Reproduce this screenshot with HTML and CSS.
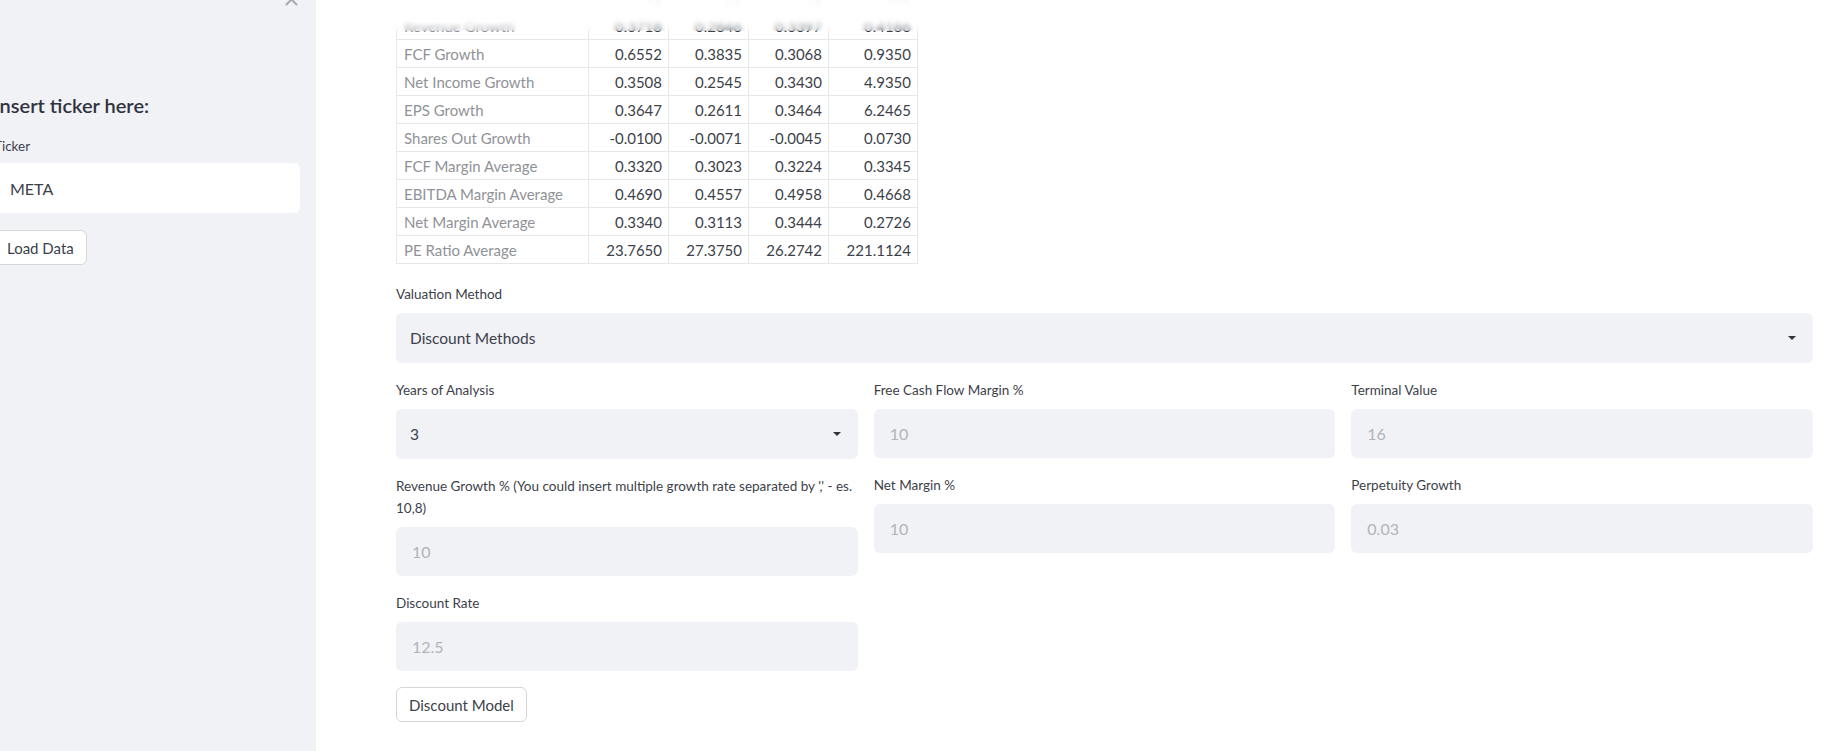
FILE: index.html
```html
<!DOCTYPE html>
<html lang="en">
<head>
    <meta charset="UTF-8">
    <meta name="viewport" content="width=device-width, initial-scale=1.0">
    <title>Stock Valuation</title>
    <link rel="stylesheet" href="styles.css">
</head>
<body>
    <div class="app">
        <aside class="sidebar">
            <button class="close-btn" aria-label="Close sidebar">
                <svg width="13" height="13" viewBox="0 0 13 13">
                    <path d="M1.5 1.5 L11.5 11.5 M11.5 1.5 L1.5 11.5" stroke="#a3a8b4" stroke-width="2" stroke-linecap="round"/>
                </svg>
            </button>
            <div class="sidebar-content">
                <h3>Insert ticker here:</h3>
                <label class="field-label" for="ticker">Ticker</label>
                <input class="text-input ticker-input" id="ticker" type="text" value="META">
                <button class="btn load-btn">Load Data</button>
            </div>
        </aside>

        <main class="main">
            <div class="header-blur"></div>
            <div class="block">
                <table class="data-table">
                    <colgroup>
                        <col style="width:192px">
                        <col style="width:80px">
                        <col style="width:80px">
                        <col style="width:80px">
                        <col style="width:89px">
                    </colgroup>
                    <thead>
                        <tr><th></th><th>1y</th><th>3y</th><th>5y</th><th>10y</th></tr>
                    </thead>
                    <tbody>
                        <tr><td>Revenue Growth</td><td>0.3718</td><td>0.2846</td><td>0.3397</td><td>0.4186</td></tr>
                        <tr><td>FCF Growth</td><td>0.6552</td><td>0.3835</td><td>0.3068</td><td>0.9350</td></tr>
                        <tr><td>Net Income Growth</td><td>0.3508</td><td>0.2545</td><td>0.3430</td><td>4.9350</td></tr>
                        <tr><td>EPS Growth</td><td>0.3647</td><td>0.2611</td><td>0.3464</td><td>6.2465</td></tr>
                        <tr><td>Shares Out Growth</td><td>-0.0100</td><td>-0.0071</td><td>-0.0045</td><td>0.0730</td></tr>
                        <tr><td>FCF Margin Average</td><td>0.3320</td><td>0.3023</td><td>0.3224</td><td>0.3345</td></tr>
                        <tr><td>EBITDA Margin Average</td><td>0.4690</td><td>0.4557</td><td>0.4958</td><td>0.4668</td></tr>
                        <tr><td>Net Margin Average</td><td>0.3340</td><td>0.3113</td><td>0.3444</td><td>0.2726</td></tr>
                        <tr><td>PE Ratio Average</td><td>23.7650</td><td>27.3750</td><td>26.2742</td><td>221.1124</td></tr>
                    </tbody>
                </table>

                <div class="field">
                    <label class="field-label">Valuation Method</label>
                    <div class="select">
                        <span>Discount Methods</span>
                        <span class="caret"></span>
                    </div>
                </div>

                <div class="columns">
                    <div class="col">
                        <div class="field">
                            <label class="field-label">Years of Analysis</label>
                            <div class="select">
                                <span>3</span>
                                <span class="caret"></span>
                            </div>
                        </div>
                        <div class="field">
                            <label class="field-label">Revenue Growth % (You could insert multiple growth rate separated by ',' - es. 10,8)</label>
                            <input class="text-input" type="text" value="10" disabled>
                        </div>
                        <div class="field">
                            <label class="field-label">Discount Rate</label>
                            <input class="text-input" type="text" value="12.5" disabled>
                        </div>
                        <div>
                            <button class="btn">Discount Model</button>
                        </div>
                    </div>
                    <div class="col">
                        <div class="field">
                            <label class="field-label">Free Cash Flow Margin %</label>
                            <input class="text-input" type="text" value="10" disabled>
                        </div>
                        <div class="field">
                            <label class="field-label">Net Margin %</label>
                            <input class="text-input" type="text" value="10" disabled>
                        </div>
                    </div>
                    <div class="col">
                        <div class="field">
                            <label class="field-label">Terminal Value</label>
                            <input class="text-input" type="text" value="16" disabled>
                        </div>
                        <div class="field">
                            <label class="field-label">Perpetuity Growth</label>
                            <input class="text-input" type="text" value="0.03" disabled>
                        </div>
                    </div>
                </div>
            </div>
        </main>
    </div>
</body>
</html>
```

FILE: styles.css
```css
body {
    margin: 0;
    padding: 0;
    font-family: Lato, "Source Sans Pro", sans-serif;
    color: #31333f;
    background: white;
}

.app {
    display: flex;
    height: 100vh;
    overflow: hidden;
}

/* Sidebar */
.sidebar {
    width: 316px;
    flex-shrink: 0;
    background-color: #f0f2f6;
    position: relative;
}

.close-btn {
    position: absolute;
    top: -7px;
    right: 18px;
    padding: 0;
    border: none;
    background: none;
    line-height: 0;
}

.sidebar-content {
    margin-left: -6px;
    padding: 93px 16px 0 0;
}

.sidebar-content h3 {
    margin: 0 0 18px;
    font-size: 20px;
    line-height: 24px;
    font-weight: 600;
}

.sidebar-content .field-label {
    margin-bottom: 6px;
}

.ticker-input {
    background-color: white !important;
    color: #3d3f4a !important;
    height: 50px !important;
}

.load-btn {
    margin-top: 17px;
    padding: 0 12px 0 14px;
}

/* Main area */
.main {
    flex: 1;
    position: relative;
    padding: 0 33px 0 80px;
}

.header-blur {
    position: absolute;
    top: 0;
    left: 0;
    right: 0;
    height: 31px;
    z-index: 5;
    background: linear-gradient(to bottom, rgba(255,255,255,0.9) 0, rgba(255,255,255,0.85) 21px, rgba(255,255,255,0.1) 31px);
    backdrop-filter: blur(2px);
}

.block {
    margin-top: -17px;
    display: flex;
    flex-direction: column;
    gap: 16px;
}

/* Table */
.data-table {
    border-collapse: collapse;
    table-layout: fixed;
    width: 521px;
    margin-bottom: 3px;
    font-size: 15px;
    color: #3d3f4a;
}

.data-table th,
.data-table td {
    height: 27px;
    padding: 0 6px;
    border: 1px solid #e6e7e9;
    text-align: right;
    font-weight: 400;
    white-space: nowrap;
}

.data-table th {
    color: #83858c;
}

.data-table td:first-child {
    text-align: left;
    padding-left: 7px;
    color: #909298;
}

/* Form fields */
.field-label {
    display: block;
    font-size: 13.5px;
    line-height: 22px;
    margin-bottom: 8px;
    color: #3d3f4a;
}

.select {
    box-sizing: border-box;
    height: 50px;
    background-color: #f0f2f6;
    border-radius: 6px;
    display: flex;
    align-items: center;
    justify-content: space-between;
    padding: 0 17px 0 14px;
    font-size: 15.5px;
    color: #3d3f4a;
}

.caret {
    width: 0;
    height: 0;
    border-left: 4px solid transparent;
    border-right: 4px solid transparent;
    border-top: 4px solid #31333f;
}

.text-input {
    box-sizing: border-box;
    display: block;
    width: 100%;
    height: 49px;
    padding: 0 16px;
    border: none;
    border-radius: 6px;
    background-color: #f0f2f6;
    color: #b2b4b9;
    font-family: inherit;
    font-size: 16px;
    outline: none;
}

.columns {
    display: grid;
    grid-template-columns: repeat(3, 1fr);
    gap: 16px;
    align-items: start;
}

.col {
    display: flex;
    flex-direction: column;
    gap: 16px;
}

.btn {
    height: 35px;
    padding: 0 12px;
    background: white;
    border: 1px solid #d6d6d9;
    border-radius: 6px;
    font-family: inherit;
    font-size: 15px;
    color: #3d3f4a;
    cursor: pointer;
}
```
